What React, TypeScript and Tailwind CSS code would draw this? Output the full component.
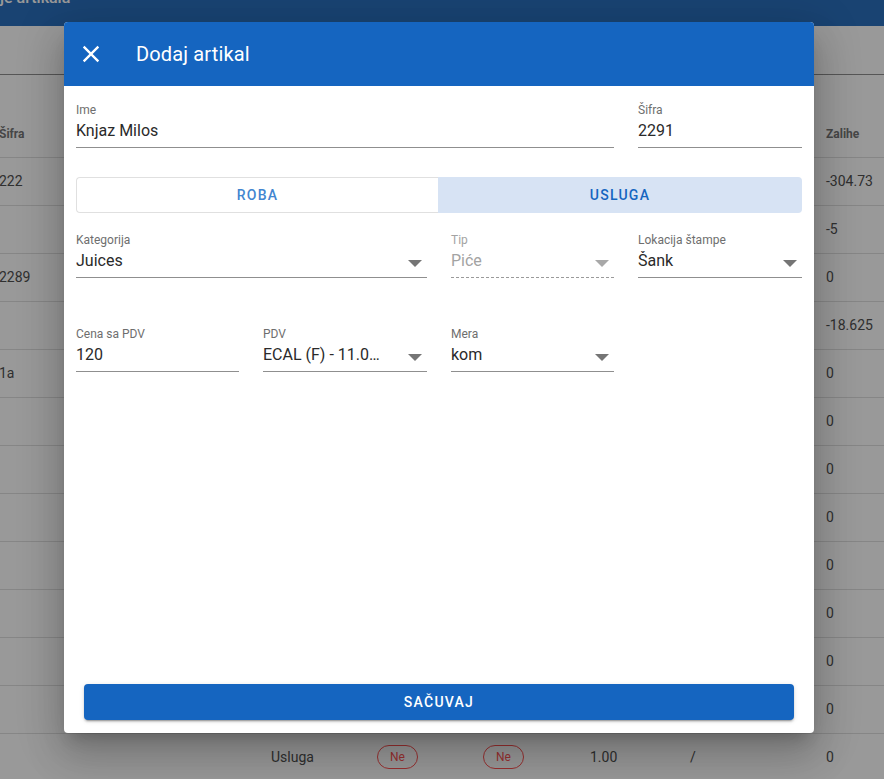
const rows = ["222", "", "2289", "", "1a", "", "", "", "", "", "", "", ""];
const stock = ["-304.73", "-5", "0", "-18.625", "0", "0", "0", "0", "0", "0", "0", "0", "0"];

function Arrow({ disabled }: { disabled?: boolean }) {
  return (
    <svg viewBox="0 0 14 7" className="mr-[5px] h-[7px] w-[14px] shrink-0">
      <path d="M0 0h14L7 7z" fill={disabled ? "#a8a8a8" : "#757575"} />
    </svg>
  );
}

function Field({
  label,
  value,
  select,
  disabled,
  className = "",
}: {
  label: string;
  value: string;
  select?: boolean;
  disabled?: boolean;
  className?: string;
}) {
  return (
    <div className={className}>
      <div className={`h-4 text-xs leading-[15px] ${disabled ? "text-[#a3a3a3]" : "text-[#6e6e6e]"}`}>{label}</div>
      <div
        className={`flex h-[29px] items-center border-b ${
          disabled ? "border-dashed border-[#9a9a9a]" : "border-[#8f8f8f]"
        }`}
      >
        <span
          className={`min-w-0 flex-1 truncate pb-[5px] text-base leading-5 ${select ? "pr-[22px]" : ""} ${
            disabled ? "text-[#a3a3a3]" : "text-[#2a2a2a]"
          }`}
        >
          {value}
        </span>
        {select && <Arrow disabled={disabled} />}
      </div>
    </div>
  );
}

function Chip() {
  return (
    <span className="flex h-6 w-[41px] items-center justify-center rounded-full border border-[#ff5252] text-xs text-[#ff5252]">
      Ne
    </span>
  );
}

export default function App() {
  return (
    <div className="relative h-[779px] w-[884px] overflow-hidden bg-white font-['Roboto',sans-serif] text-sm text-[#505050]">
      <div className="h-[26px] overflow-hidden bg-[#2b71be]">
        <div className="-mt-[9px] text-base font-medium leading-[14px] text-white">je artikala</div>
      </div>
      <div className="h-[49px] border-b border-[#8f8f8f]" />
      <div className="flex h-[82px] items-end pb-[15px] text-xs font-bold text-[#757575]">
        <span className="-ml-px w-[827px]">Šifra</span>
        <span>Zalihe</span>
      </div>
      {rows.map((code, i) => (
        <div key={i} className="flex h-12 items-center border-t border-[#e0e0e0] pb-px">
          <span className="-ml-px w-[272px]">{code}</span>
          {i === 12 && (
            <>
              <span className="w-[106px]">Usluga</span>
              <span className="w-[106px]"><Chip /></span>
              <span className="w-[107px]"><Chip /></span>
              <span className="w-[100px]">1.00</span>
              <span className="w-[136px]">/</span>
            </>
          )}
          <span className={i === 12 ? "" : "ml-[555px]"}>{stock[i]}</span>
        </div>
      ))}

      <div className="absolute inset-0 bg-black/40" />

      <div className="absolute left-16 top-[22px] flex h-[711px] w-[750px] flex-col overflow-hidden rounded bg-white shadow-[0_11px_15px_-7px_rgba(0,0,0,0.2),0_24px_38px_3px_rgba(0,0,0,0.14),0_9px_46px_8px_rgba(0,0,0,0.12)]">
        <div className="flex h-16 shrink-0 items-center bg-[#1565c0] pl-[13px] text-white">
          <svg viewBox="0 0 24 24" className="h-7 w-7" fill="currentColor">
            <path d="M19 6.41 17.59 5 12 10.59 6.41 5 5 6.41 10.59 12 5 17.59 6.41 19 12 13.41 17.59 19 19 17.59 13.41 12z" />
          </svg>
          <h1 className="ml-[31px] text-xl font-normal tracking-[0.15px]">Dodaj artikal</h1>
        </div>

        <div className="flex flex-1 flex-col px-3 pt-[17px]">
          <div className="grid grid-cols-[163px_164px_163px_164px] gap-x-6">
            <Field label="Ime" value="Knjaz Milos" className="col-span-3" />
            <Field label="Šifra" value="2291" />
          </div>

          <div className="mt-[29px] flex h-9 text-sm font-medium tracking-[1.25px]">
            <button className="flex-1 rounded-l border border-r-0 border-[#e0e0e0] text-[#4285d0]">ROBA</button>
            <button className="w-[364px] rounded-r bg-[#d7e3f4] text-[#1565c0]">USLUGA</button>
          </div>

          <div className="mt-5 grid grid-cols-[163px_164px_163px_164px] gap-x-6">
            <Field label="Kategorija" value="Juices" select className="col-span-2" />
            <Field label="Tip" value="Piće" select disabled />
            <Field label="Lokacija štampe" value="Šank" select />
          </div>

          <div className="mt-[49px] grid grid-cols-[163px_164px_163px_164px] gap-x-6">
            <Field label="Cena sa PDV" value="120" />
            <Field label="PDV" value="ECAL (F) - 11.00%" select />
            <Field label="Mera" value="kom" select />
          </div>

          <button className="mx-2 mb-[13px] mt-auto h-9 rounded bg-[#1565c0] text-sm font-medium tracking-[1.25px] text-white shadow-[0_3px_1px_-2px_rgba(0,0,0,0.2),0_2px_2px_0_rgba(0,0,0,0.14),0_1px_5px_0_rgba(0,0,0,0.12)]">
            SAČUVAJ
          </button>
        </div>
      </div>
    </div>
  );
}
